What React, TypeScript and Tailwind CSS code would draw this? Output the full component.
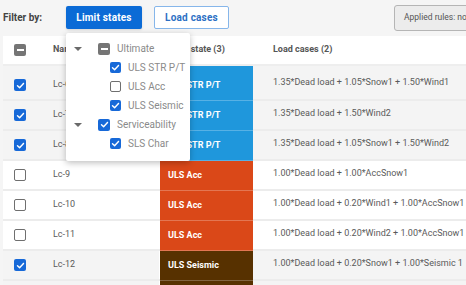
import type { ReactNode } from 'react';

type Row = {
    id: string;
    checked: boolean;
    state: string;
    color: string;
    combo: string;
};

const rows: Row[] = [
    { id: "Lc-6", checked: true, state: "ULS STR P/T", color: "bg-[#1f97dc]", combo: "1.35*Dead load + 1.05*Snow1 + 1.50*Wind1" },
    { id: "Lc-7", checked: true, state: "ULS STR P/T", color: "bg-[#1f97dc]", combo: "1.35*Dead load + 1.50*Wind2" },
    { id: "Lc-8", checked: true, state: "ULS STR P/T", color: "bg-[#1f97dc]", combo: "1.35*Dead load + 1.05*Snow1 + 1.50*Wind2" },
    { id: "Lc-9", checked: false, state: "ULS Acc", color: "bg-[#da4818]", combo: "1.00*Dead load + 1.00*AccSnow1" },
    { id: "Lc-10", checked: false, state: "ULS Acc", color: "bg-[#da4818]", combo: "1.00*Dead load + 0.20*Wind1 + 1.00*AccSnow1" },
    { id: "Lc-11", checked: false, state: "ULS Acc", color: "bg-[#da4818]", combo: "1.00*Dead load + 0.20*Wind2 + 1.00*AccSnow1" },
    { id: "Lc-12", checked: true, state: "ULS Seismic", color: "bg-[#573100]", combo: "1.00*Dead load + 0.20*Snow1 + 1.00*Seismic 1" },
    { id: "Lc-13", checked: true, state: "ULS Seismic", color: "bg-[#573100]", combo: "1.00*Dead load + 0.20*Snow2 + 1.00*Seismic 1" },
];

function Box({ state, size = 12 }: { state: 'on' | 'off' | 'mixed'; size?: number }) {
    if (state === 'off') {
        return <span style={{ width: size, height: size }} className="block shrink-0 rounded-[2px] border-[1.5px] border-[#6f6f6f] bg-white" />;
    }
    if (state === 'mixed') {
        return (
            <span style={{ width: size, height: size }} className="flex shrink-0 items-center justify-center rounded-[2px] bg-[#757575]">
                <span className="h-[2px] w-[7px] bg-white" />
            </span>
        );
    }
    return (
        <span style={{ width: size, height: size }} className="flex shrink-0 items-center justify-center rounded-[2px] bg-[#1769d8]">
            <svg width="9" height="9" viewBox="0 0 12 12" fill="none">
                <path d="M2 6.3 L4.8 9 L10 3.2" stroke="white" strokeWidth="1.9" strokeLinecap="round" strokeLinejoin="round" />
            </svg>
        </span>
    );
}

function Caret() {
    return <span className="block h-0 w-0 border-x-[4px] border-t-[4px] border-x-transparent border-t-[#6a6a6a]" />;
}

function MenuItem({ children, state, parent }: { children: ReactNode; state: 'on' | 'off' | 'mixed'; parent?: boolean }) {
    return (
        <div className={`flex h-[19px] items-center whitespace-nowrap ${parent ? 'pl-[8px]' : 'pl-[44px]'}`}>
            {parent && <span className="mr-[16px]"><Caret /></span>}
            <Box state={state} size={parent ? 12 : 11} />
            <span className="ml-[7px] text-[10px] text-[#8a8a8a]">{children}</span>
        </div>
    );
}

export default function App() {
    return (
        <div className="relative h-[285px] w-[466px] overflow-hidden bg-[#f5f5f5] font-['Roboto',sans-serif]">
            <div className="flex h-[36px] items-center pb-[1px]">
                <span className="ml-[3px] w-[63px] shrink-0 text-[10px] font-bold text-[#444]">Filter by:</span>
                <button className="h-[23px] w-[76px] shrink-0 rounded-[2px] bg-[#0b6bd6] text-[10px] font-bold tracking-[0.2px] text-white shadow-sm">
                    Limit states
                </button>
                <button className="ml-[12px] h-[23px] w-[75px] shrink-0 rounded-[2px] border border-[#86b6ea] bg-white text-[10px] font-bold tracking-[0.2px] text-[#2c70c4]">
                    Load cases
                </button>
                <div className="ml-[165px] flex h-[26px] w-[110px] shrink-0 items-center rounded-[3px] border border-[#b5b5b5] bg-[#ececec] pl-[9px] text-[8.5px] whitespace-nowrap text-[#555]">
                    Applied rules: none
                </div>
            </div>

            <div className="ml-[3px] w-[600px] bg-white">
                <div className="flex h-[30px] items-center border-b-[2px] border-[#eeeeee] text-[9px] font-bold text-[#555]">
                    <div className="w-[37px] shrink-0 pl-[11px]"><Box state="mixed" /></div>
                    <div className="w-[120px] shrink-0 pl-[13px]">Name</div>
                    <div className="w-[93px] shrink-0 pl-[8px]">Limit state (3)</div>
                    <div className="pl-[20px]">Load cases (2)</div>
                </div>

                {rows.map((r, i) => (
                    <div
                        key={r.id}
                        className={`flex border-b-[2px] border-[#ececec] text-[9px] text-[#5a5a5a] ${i === 0 ? 'h-[35px]' : 'h-[30px]'} ${r.checked ? 'bg-[#f4f4f4]' : 'bg-white'}`}
                    >
                        <div className={`flex w-[37px] shrink-0 items-center pl-[11px] ${i === 0 ? 'pt-[5px]' : ''}`}>
                            <Box state={r.checked ? 'on' : 'off'} />
                        </div>
                        <div className={`flex w-[120px] shrink-0 items-center border-r border-white pl-[13px] ${i === 0 ? 'pt-[5px]' : ''}`}>{r.id}</div>
                        <div className={`${r.color} -mb-[2px] flex w-[93px] shrink-0 items-center border-b-[1px] border-white/25 pl-[8px] font-bold whitespace-nowrap text-white ${i === 0 ? 'pt-[5px]' : ''}`}>
                            {r.state}
                        </div>
                        <div className={`shrink-0 pl-[20px] whitespace-nowrap ${i === 0 ? 'pt-[10px]' : 'pt-[6px]'}`}>{r.combo}</div>
                    </div>
                ))}
            </div>

            <div className="absolute top-[33px] left-[66px] w-[124px] rounded-[2px] bg-white pt-[6px] pb-[8px] shadow-[0_2px_6px_rgba(0,0,0,0.25)]">
                <MenuItem parent state="mixed">Ultimate</MenuItem>
                <MenuItem state="on">ULS STR P/T</MenuItem>
                <MenuItem state="off">ULS Acc</MenuItem>
                <MenuItem state="on">ULS Seismic</MenuItem>
                <MenuItem parent state="on">Serviceability</MenuItem>
                <MenuItem state="on">SLS Char</MenuItem>
            </div>
        </div>
    );
}
